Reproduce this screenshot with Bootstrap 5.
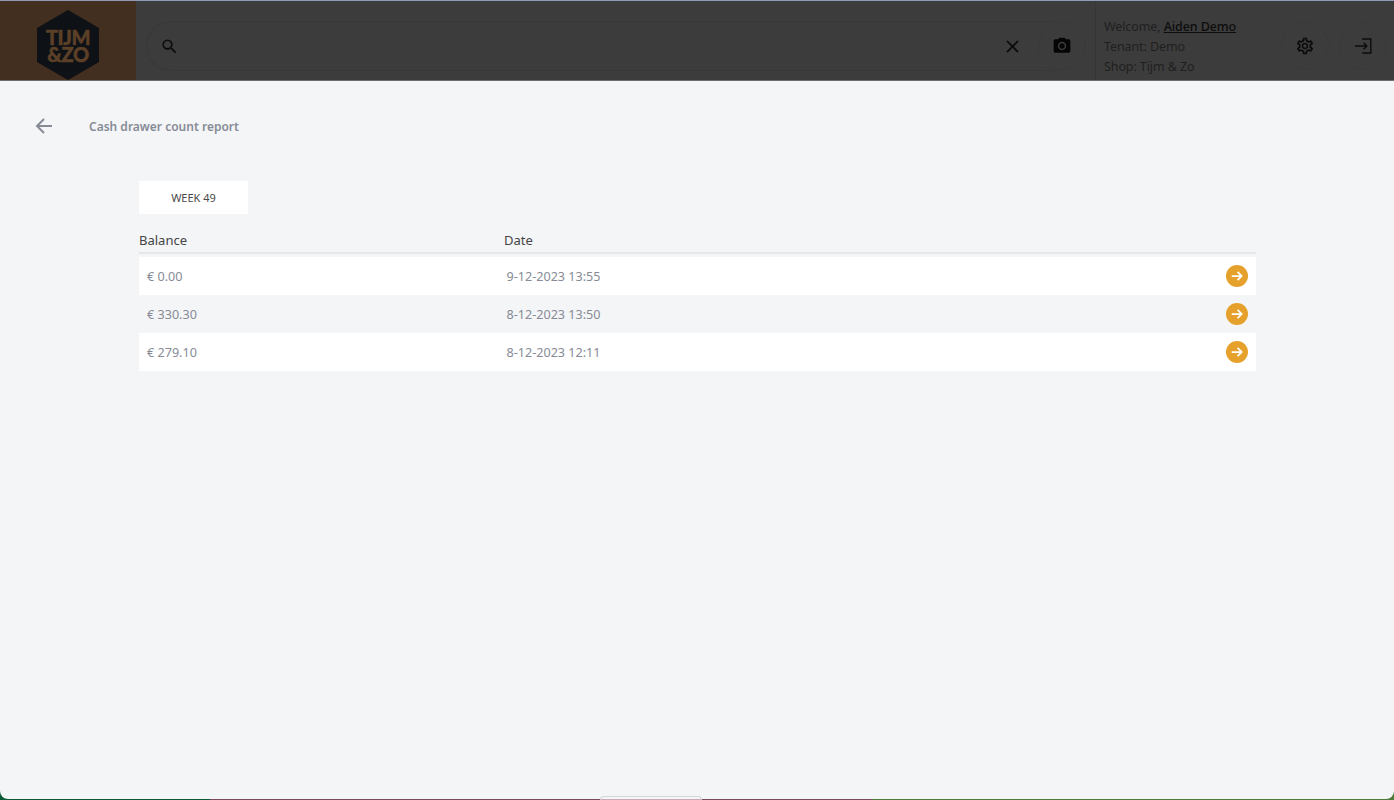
<!DOCTYPE html>
<html lang="en"><head><meta charset="utf-8"><title>Cash drawer count report</title>
<link href="https://cdn.jsdelivr.net/npm/bootstrap@5.3.0/dist/css/bootstrap.min.css" rel="stylesheet">
<style>
html,body{height:100%;overflow:hidden}
body{font-family:"Noto Sans","Liberation Sans",sans-serif;background:#f4f5f7;font-size:12.6px}
.stage{height:800px;background:linear-gradient(90deg,#0a5a35 0 210px,#7a4a5c 210px 872px,#4f7a3a 872px 100%)}
.strip{height:1px;background:#8d9ab8}
.topbar{height:80px;background:#3c3c3c;color:#1d1d1d;border-bottom:1px solid #6d6d6d}
.logocell{width:136px;background:#432f20}
.hexlogo{width:64px;height:70px;margin-top:9px;margin-left:36px;flex:none;display:block}
.hexlogo text{font-family:"Lato","Liberation Sans",sans-serif;font-weight:900;font-size:20px;fill:#5b4027;stroke:#5b4027;stroke-width:.5px;letter-spacing:-.4px}
.searchpill{height:50px;margin:20px -20px 0 10px;padding:0 35px 0 13px;border:1px solid #383838;border-right:0;border-radius:25px 0 0 25px;min-width:0}
.roundbtn{width:48px;height:48px;border-radius:50%;border:1px solid #3a3a3a;margin-top:21px}
.userpanel{width:186px;padding:16px 0 0 8px;border-left:1px solid #363636;line-height:20px;color:#1f1f1f;height:79px;margin-left:9px;font-size:12.5px;letter-spacing:-.1px}
.userpanel a{color:#0c0c0c;font-weight:500}
.exitbtn{margin-left:10px;margin-right:7px}
.mainarea{background:#f4f5f7;border-radius:0 0 8px 8px;margin-bottom:1px}
.titlebar{padding:35px 0 0 34px;height:100px}
.pagetitle{color:#868b96;font-weight:600;font-size:12px;margin:2px 0 0 35px}
.reportwrap{margin-left:139px;width:1117px}
.weektab{width:109px;height:33px;background:#fff;color:#4a4a4a;font-size:11px;padding-top:1px}
.headrow{color:#444;height:27px;margin-top:13px;padding-top:4px;border-bottom:2px solid #e5e7eb;margin-bottom:3px;font-size:13px}
.datarow{height:38px;color:#868b96;padding:0 8px}
.datarow.isodd{background:#fff}
.datacell{padding-top:2px}
.colbal{width:365px;flex:none}
.colbal.inrow{width:359.5px}
.gobtn{width:22px;height:22px;background:#e6a12c;border-radius:50%}
.tabpeek{width:102px;height:4px;left:600px;bottom:0;background:linear-gradient(#f4f5f7 66%,#c9a9b6 66%);border:1px solid #d6d6d6;border-bottom:0;border-radius:4px 4px 0 0}
</style></head>
<body>
<div class="stage position-relative d-flex flex-column">
<div class="strip"></div>
<header class="topbar d-flex flex-shrink-0">
  <div class="logocell flex-shrink-0">
    <svg class="hexlogo" viewBox="0 0 64 70"><polygon points="32,0 63,18 63,52 32,70 1,52 1,18" fill="#0e1116"/><text x="32" y="35" text-anchor="middle">TIJM</text><text x="32" y="52" text-anchor="middle">&amp;ZO</text></svg>
  </div>
  <div class="searchpill flex-grow-1 d-flex align-items-center justify-content-between">
    <svg width="19" height="19" viewBox="0 0 24 24" fill="#0b0b0b"><path d="M15.5 14h-.79l-.28-.27A6.47 6.47 0 0 0 16 9.5 6.5 6.5 0 1 0 9.5 16c1.61 0 3.09-.59 4.23-1.57l.27.28v.79l5 4.99L20.49 19l-4.99-5zm-6 0C7.01 14 5 11.99 5 9.5S7.01 5 9.5 5 14 7.01 14 9.5 11.99 14 9.5 14z"/></svg>
    <svg width="21" height="21" viewBox="0 0 24 24" fill="#0b0b0b"><path d="M19 6.41 17.59 5 12 10.59 6.41 5 5 6.41 10.59 12 5 17.59 6.41 19 12 13.41 17.59 19 19 17.59 13.41 12z"/></svg>
  </div>
  <div class="roundbtn d-flex align-items-center justify-content-center flex-shrink-0">
    <svg width="20" height="20" viewBox="0 0 24 24" fill="#050505"><circle cx="12" cy="12" r="3.2"/><path d="M9 2 7.17 4H4c-1.1 0-2 .9-2 2v12c0 1.1.9 2 2 2h16c1.1 0 2-.9 2-2V6c0-1.1-.9-2-2-2h-3.17L15 2H9zm3 15c-2.76 0-5-2.24-5-5s2.24-5 5-5 5 2.24 5 5-2.24 5-5 5z"/></svg>
  </div>
  <div class="userpanel flex-shrink-0">
    <div>Welcome, <a href="#">Aiden Demo</a></div>
    <div>Tenant: Demo</div>
    <div>Shop: Tijm &amp; Zo</div>
  </div>
  <div class="roundbtn d-flex align-items-center justify-content-center flex-shrink-0">
    <svg width="20" height="20" viewBox="0 0 24 24" fill="#0b0b0b"><path d="M19.43 12.98c.04-.32.07-.64.07-.98 0-.34-.03-.66-.07-.98l2.11-1.65c.19-.15.24-.42.12-.64l-2-3.46c-.09-.16-.26-.25-.44-.25-.06 0-.12.01-.17.03l-2.49 1c-.52-.4-1.08-.73-1.69-.98l-.38-2.65C14.46 2.18 14.25 2 14 2h-4c-.25 0-.46.18-.49.42l-.38 2.65c-.61.25-1.17.59-1.69.98l-2.49-1c-.06-.02-.12-.03-.18-.03-.17 0-.34.09-.43.25l-2 3.46c-.13.22-.07.49.12.64l2.11 1.65c-.04.32-.07.65-.07.98 0 .33.03.66.07.98l-2.11 1.65c-.19.15-.24.42-.12.64l2 3.46c.09.16.26.25.44.25.06 0 .12-.01.17-.03l2.49-1c.52.4 1.08.73 1.69.98l.38 2.65c.03.24.24.42.49.42h4c.25 0 .46-.18.49-.42l.38-2.65c.61-.25 1.17-.59 1.69-.98l2.49 1c.06.02.12.03.18.03.17 0 .34-.09.43-.25l2-3.46c.12-.22.07-.49-.12-.64l-2.11-1.65zm-1.98-1.71c.04.31.05.52.05.73 0 .21-.02.43-.05.73l-.14 1.13.89.7 1.08.84-.7 1.21-1.27-.51-1.04-.42-.9.68c-.43.32-.84.56-1.25.73l-1.06.43-.16 1.13-.2 1.35h-1.4l-.19-1.35-.16-1.13-1.06-.43c-.43-.18-.83-.41-1.23-.71l-.91-.7-1.06.43-1.27.51-.7-1.21 1.08-.84.89-.7-.14-1.13c-.03-.31-.05-.54-.05-.74s.02-.43.05-.73l.14-1.13-.89-.7-1.08-.84.7-1.21 1.27.51 1.04.42.9-.68c.43-.32.84-.56 1.25-.73l1.06-.43.16-1.13.2-1.35h1.39l.19 1.35.16 1.13 1.06.43c.43.18.83.41 1.23.71l.91.7 1.06-.43 1.27-.51.7 1.21-1.07.85-.89.7.14 1.13zM12 8c-2.21 0-4 1.79-4 4s1.79 4 4 4 4-1.79 4-4-1.79-4-4-4zm0 6c-1.1 0-2-.9-2-2s.9-2 2-2 2 .9 2 2-.9 2-2 2z"/></svg>
  </div>
  <div class="roundbtn exitbtn d-flex align-items-center justify-content-center flex-shrink-0">
    <svg width="20" height="20" viewBox="0 0 24 24" fill="none" stroke="#0b0b0b" stroke-width="1.6"><path d="M11 3.6h10.4v16.8H11M2.4 12h14M12.8 8.2l3.8 3.8-3.8 3.8"/></svg>
  </div>
</header>
<main class="mainarea flex-grow-1">
  <div class="titlebar d-flex align-items-start">
    <svg class="flex-shrink-0" width="20" height="20" viewBox="0 0 20 20" fill="none" stroke="#868b96" stroke-width="2"><path d="M18 10H3M10 3l-7 7 7 7"/></svg>
    <span class="pagetitle lh-base">Cash drawer count report</span>
  </div>
  <div class="reportwrap">
    <div class="weektab d-flex align-items-center justify-content-center">WEEK 49</div>
    <div class="headrow d-flex"><div class="colbal">Balance</div><div>Date</div></div>
    <div class="datarow isodd d-flex align-items-center"><div class="colbal inrow datacell">€ 0.00</div><div class="flex-grow-1 datacell">9-12-2023 13:55</div><span class="gobtn d-flex align-items-center justify-content-center"><svg width="14" height="14" viewBox="0 0 12 12" fill="none" stroke="#fff" stroke-width="1.5"><path d="M1.5 6h8.5M6.5 2.5 10 6 6.5 9.5"/></svg></span></div>
    <div class="datarow d-flex align-items-center"><div class="colbal inrow datacell">€ 330.30</div><div class="flex-grow-1 datacell">8-12-2023 13:50</div><span class="gobtn d-flex align-items-center justify-content-center"><svg width="14" height="14" viewBox="0 0 12 12" fill="none" stroke="#fff" stroke-width="1.5"><path d="M1.5 6h8.5M6.5 2.5 10 6 6.5 9.5"/></svg></span></div>
    <div class="datarow isodd d-flex align-items-center"><div class="colbal inrow datacell">€ 279.10</div><div class="flex-grow-1 datacell">8-12-2023 12:11</div><span class="gobtn d-flex align-items-center justify-content-center"><svg width="14" height="14" viewBox="0 0 12 12" fill="none" stroke="#fff" stroke-width="1.5"><path d="M1.5 6h8.5M6.5 2.5 10 6 6.5 9.5"/></svg></span></div>
  </div>
</main>
<div class="tabpeek position-absolute"></div>
</div>
</body></html>
